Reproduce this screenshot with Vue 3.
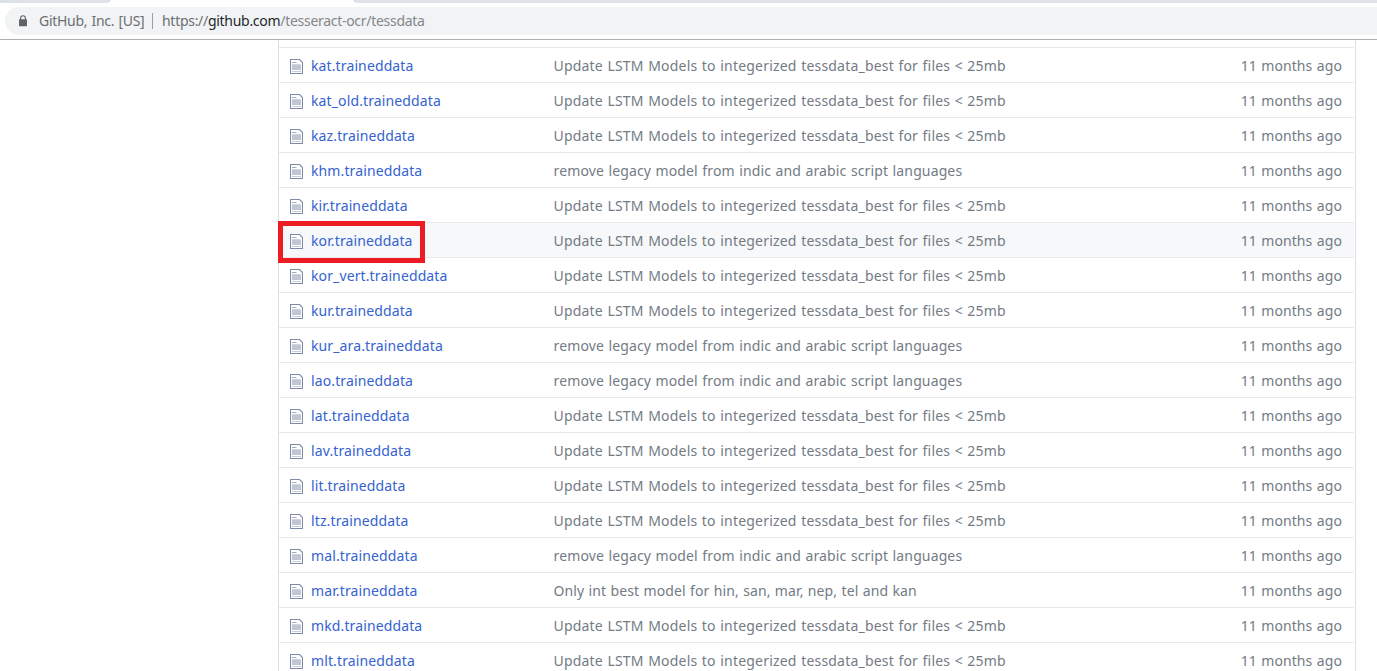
<script setup>
const update = { kind: 'update', text: 'Update LSTM Models to integerized tessdata_best for files < 25mb' }
const legacy = { kind: 'legacy', text: 'remove legacy model from indic and arabic script languages' }
const hindi = { kind: 'hindi', text: 'Only int best model for hin, san, mar, nep, tel and kan' }

const files = [
  ['kat', update],
  ['kat_old', update],
  ['kaz', update],
  ['khm', legacy],
  ['kir', update],
  ['kor', update],
  ['kor_vert', update],
  ['kur', update],
  ['kur_ara', legacy],
  ['lao', legacy],
  ['lat', update],
  ['lav', update],
  ['lit', update],
  ['ltz', update],
  ['mal', legacy],
  ['mar', hindi],
  ['mkd', update],
  ['mlt', update],
].map(([lang, message]) => ({ name: `${lang}.traineddata`, message, active: lang === 'kor' }))
</script>

<template>
  <div class="window">
    <header class="chrome">
      <div class="tabs">
        <div class="tab-left"></div>
        <div class="tab-right"></div>
      </div>
      <div class="address">
        <svg class="lock" width="10" height="12" viewBox="0 0 10 12">
          <path d="M2.6 5V3.2a2.4 2.4 0 0 1 4.8 0V5" fill="none" stroke="#5f6368" stroke-width="1.1" />
          <rect x="1" y="4.2" width="8" height="7" rx="0.7" fill="#5f6368" />
        </svg>
        <span class="owner">GitHub, Inc. [US]</span>
        <span class="divider"></span>
        <span class="url">https://<b>github.com</b><i>/tesseract-ocr/tessdata</i></span>
      </div>
    </header>
    <main class="page">
      <div class="files">
        <div v-for="file in files" :key="file.name" class="row" :class="{ active: file.active }">
          <svg class="icon" width="13" height="15" viewBox="0 0 13 15">
            <path d="M0.5 0.5H9.5L12.5 3.5V14.5H0.5Z" fill="#fff" stroke="#7f8aab" stroke-width="1.1" />
            <path d="M2 3.5H6.5" stroke="#a3abc1" />
            <path d="M2 5.5H10.5" stroke="#cdd2de" />
            <rect x="2" y="6" width="9" height="5" fill="#c0c6d4" />
            <path d="M2 12.5H11" stroke="#c9ceda" />
          </svg>
          <a class="name">{{ file.name }}</a>
          <span class="message" :class="file.message.kind">{{ file.message.text }}</span>
          <span class="age">11 months ago</span>
          <span v-if="file.active" class="marker"></span>
        </div>
      </div>
    </main>
  </div>
</template>

<style>
body {
  margin: 0;
  background: #fff;
}
</style>

<style scoped>
.window {
  height: 671px;
  overflow: hidden;
  font: 14px/20px "Noto Sans", "Open Sans", sans-serif;
}
.chrome {
  box-sizing: border-box;
  height: 40px;
  border-bottom: 1px solid #aeb0b2;
}
.tabs {
  display: flex;
  justify-content: space-between;
  height: 3px;
}
.tab-left {
  width: 111px;
  background: #dee1e6;
  border-bottom-right-radius: 5px 3px;
}
.tab-right {
  width: 1024px;
  background: #dee1e6;
  border-bottom-left-radius: 5px 3px;
}
.address {
  display: flex;
  align-items: center;
  height: 28px;
  margin: 4px 0 0 5px;
  padding-left: 13px;
  border-radius: 14px 0 0 14px;
  background: #f1f3f4;
  color: #6c6f73;
  white-space: nowrap;
}
.lock {
  flex: none;
}
.owner {
  width: 105px;
  margin-left: 11px;
  letter-spacing: -0.3px;
  word-spacing: 1px;
}
.divider {
  width: 1px;
  height: 16px;
  margin: 0 9px 0 8px;
  background: #9c9ea1;
}
.url {
  letter-spacing: -0.29px;
}
.url b {
  font-weight: 400;
  color: #25272a;
}
.url i {
  font-style: normal;
  color: #85878b;
}
.page {
  height: 631px;
  padding-left: 278px;
  overflow: hidden;
}
.files {
  box-sizing: border-box;
  width: 1078px;
  height: 631px;
  padding: 7px 1px 0 0;
  border: solid #dddfe2;
  border-width: 0 1px;
}
.row {
  position: relative;
  display: flex;
  align-items: center;
  box-sizing: border-box;
  height: 35px;
  padding: 1px 12px 0 11px;
  border-top: 1px solid #e7e9ec;
  color: #737b84;
  white-space: nowrap;
}
.active {
  background: #f6f8fa;
}
.icon {
  flex: none;
  margin: 1px 8px 0 0;
}
.name {
  width: 242.5px;
  color: #3563d0;
  letter-spacing: 0.12px;
}
.message {
  flex: 1;
}
.update {
  letter-spacing: 0.2px;
  word-spacing: 0.63px;
}
.legacy {
  letter-spacing: 0.13px;
  word-spacing: 0.7px;
}
.hindi {
  letter-spacing: 0.12px;
  word-spacing: 0.5px;
}
.age {
  letter-spacing: 0.1px;
  word-spacing: 0.6px;
}
.marker {
  position: absolute;
  left: -1px;
  top: -2px;
  box-sizing: border-box;
  width: 147px;
  height: 42px;
  border: 5px solid #ed1c24;
  z-index: 1;
}
</style>
